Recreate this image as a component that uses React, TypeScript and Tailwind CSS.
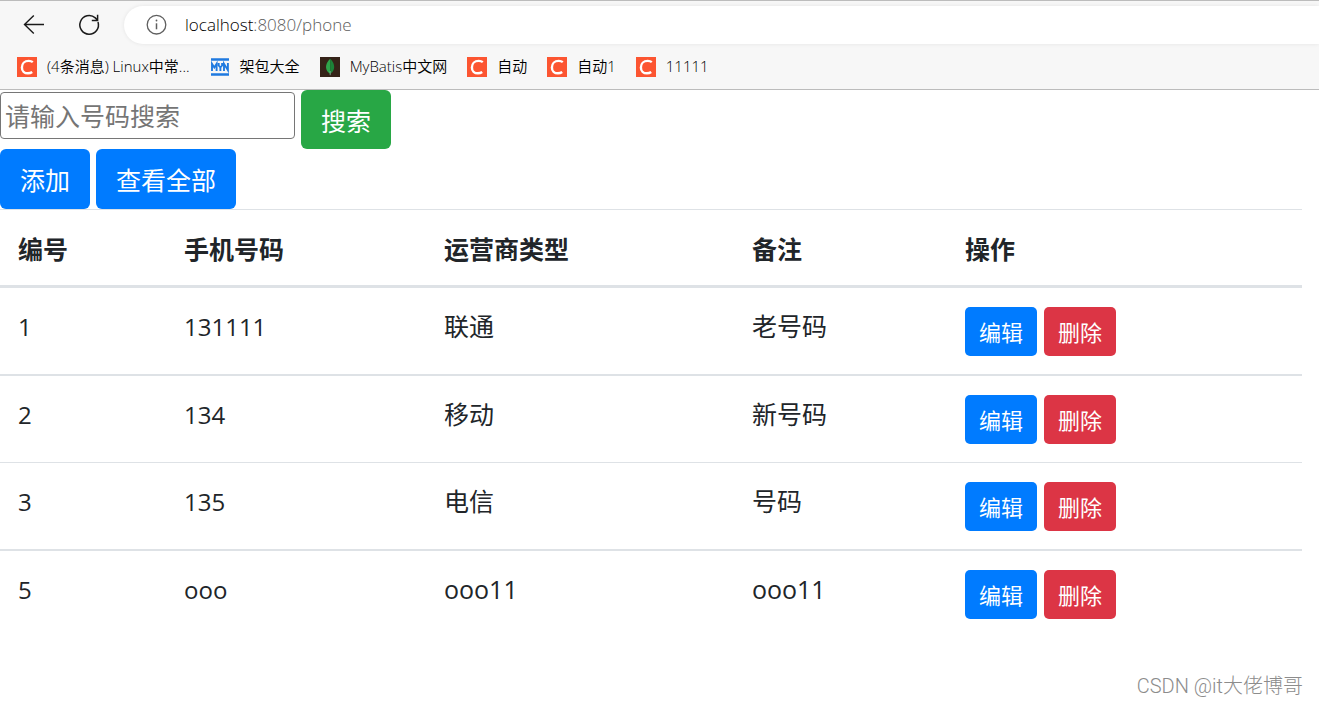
import type { ReactNode } from 'react';

interface PhoneRow {
  id: number;
  phone: string;
  carrier: string;
  remark: string;
  border: string;
}

const rows: PhoneRow[] = [
  { id: 1, phone: '131111', carrier: '联通', remark: '老号码', border: '' },
  { id: 2, phone: '134', carrier: '移动', remark: '新号码', border: 'border-t-2' },
  { id: 3, phone: '135', carrier: '电信', remark: '号码', border: 'border-t' },
  { id: 5, phone: 'ooo', carrier: 'ooo11', remark: 'ooo11', border: 'border-t-2' },
];

const columns = [
  { title: '编号', width: 'w-[12.75%]' },
  { title: '手机号码', width: 'w-[19.97%]' },
  { title: '运营商类型', width: 'w-[23.65%]' },
  { title: '备注', width: 'w-[16.36%]' },
  { title: '操作', width: '' },
];

function CsdnIcon() {
  return (
    <svg viewBox="0 0 20 20" className="h-5 w-5 shrink-0" aria-hidden="true">
      <rect width="20" height="20" fill="#fc5531" />
      <path
        d="M15.8 5.2C14.600 4.200 13.300 3.900 11.700 3.900 7.500 3.900 4.900 6.700 4.900 10.400c0 3.800 2.600 5.900 6 5.900 1.600 0 3.100-.4 4.300-1.300"
        fill="none"
        stroke="#fff"
        strokeWidth="2.4"
      />
    </svg>
  );
}

function MvnIcon() {
  return (
    <svg viewBox="0 0 20 20" className="h-5 w-5 shrink-0" aria-hidden="true">
      <path d="M1 2.500h18M1 17.500h18" stroke="#1f7ae0" strokeWidth="2.400" />
      <path
        d="M2 14V6.800L4.300 10.500l2.300-3.700V14M8.700 6v2.500l1.700 2v3.500v-3.500l1.700-2V6M14 14V6.800l3.900 6.400V6"
        fill="none"
        stroke="#1f7ae0"
        strokeWidth="1.900"
      />
    </svg>
  );
}

function LeafIcon() {
  return (
    <svg viewBox="0 0 20 20" className="h-5 w-5 shrink-0" aria-hidden="true">
      <rect width="20" height="20" fill="#352318" />
      <path d="M10.2 1.800C7.400 4.400 6 7.300 6 10c0 3 1.600 5.200 4.200 6.800z" fill="#2fa44a" />
      <path d="M10.200 1.800C12.900 4.400 14.200 7.300 14.200 10c0 3-1.500 5.200-4 6.800z" fill="#1c8238" />
      <path d="M10.200 14v4.200" stroke="#8bb59a" strokeWidth=".8" />
    </svg>
  );
}

function Bookmark({ icon, children }: { icon: ReactNode; children: ReactNode }) {
  return (
    <a href="#" className="flex items-center gap-[10px] text-[15px] leading-[18px] text-black">
      {icon}
      <span className="pb-[2px] whitespace-nowrap">{children}</span>
    </a>
  );
}

function BrowserBar() {
  return (
    <header className="border-t border-b border-[#bcbcbc] bg-[#f7f7f7]">
      <div className="flex items-center pt-[5px]">
        <button type="button" aria-label="Back" className="ml-[22px] h-6 w-6">
          <svg viewBox="0 0 24 24" className="h-6 w-6" fill="none" stroke="#1a1a1a" strokeWidth="1.4">
            <path d="M22 11.500H2.500M11.800 2.500L2.500 11.500l9.300 9" />
          </svg>
        </button>
        <button type="button" aria-label="Refresh" className="ml-[31px] h-6 w-6">
          <svg viewBox="0 0 24 24" className="h-6 w-6" fill="none" stroke="#1a1a1a" strokeWidth="1.500">
            <path d="M21 9A9.300 9.300 0 1 1 18.300 4.900L20.600 7.200M20.600 1.800v5.600h-5.800" />
          </svg>
        </button>
        <div className="ml-[23px] flex h-[38px] flex-1 items-center rounded-l-full bg-white pl-[22px] shadow-[0_0_4px_rgba(0,0,0,0.08)]">
          <svg viewBox="0 0 22 22" className="h-[22px] w-[22px]" fill="none" stroke="#5f5f5f" strokeWidth="1.300">
            <circle cx="10.5" cy="10.7" r="9.300" />
            <path d="M10.5 9.300v6" strokeWidth="1.500" />
            <circle cx="10.5" cy="6.500" r=".9" fill="#5f5f5f" stroke="none" />
          </svg>
          <p className="ml-[17px] text-[17px] leading-6 text-[#5c5c5c]">
            <span className="text-black">localhost</span>:8080/phone
          </p>
        </div>
      </div>
      <nav className="flex h-[45px] items-center gap-5 pl-[17px]">
        <Bookmark icon={<CsdnIcon />}>(4条消息) Linux中常...</Bookmark>
        <Bookmark icon={<MvnIcon />}>架包大全</Bookmark>
        <Bookmark icon={<LeafIcon />}>MyBatis中文网</Bookmark>
        <Bookmark icon={<CsdnIcon />}>自动</Bookmark>
        <Bookmark icon={<CsdnIcon />}>自动1</Bookmark>
        <Bookmark icon={<CsdnIcon />}>11111</Bookmark>
      </nav>
    </header>
  );
}

export default function App() {
  return (
    <div className="min-h-screen bg-white font-['Open_Sans','Noto_Sans_CJK_SC',sans-serif] font-[350] text-[#212529]">
      <BrowserBar />

      <main className="mr-[17px] font-normal">
        {/* Search */}
        <form className="flex items-start gap-[6px]" onSubmit={(e) => e.preventDefault()}>
          <input
            type="text"
            aria-label="请输入号码搜索"
            placeholder="请输入号码搜索"
            className="mt-[2px] h-[47px] w-[295px] rounded-[4px] border border-[#767676] px-1 text-[25px] placeholder:text-[#757575]"
          />
          <button
            type="submit"
            className="rounded-[6px] bg-[#28a745] px-5 pt-3 pb-[9px] text-[25px] leading-[38px] text-white"
          >
            搜索
          </button>
        </form>

        <div className="flex gap-[6px]">
          <button type="button" className="rounded-[6px] bg-[#007bff] px-5 pt-3 pb-[10px] text-[25px] leading-[38px] text-white">
            添加
          </button>
          <button type="button" className="rounded-[6px] bg-[#007bff] px-5 pt-3 pb-[10px] text-[25px] leading-[38px] text-white">
            查看全部
          </button>
        </div>

        {/* Phone list */}
        <table className="w-full table-fixed border-separate border-spacing-0 text-[25px] leading-[38px]">
          <thead>
            <tr>
              {columns.map((c) => (
                <th
                  key={c.title}
                  className={`${c.width} border-t border-b-3 border-[#dee2e6] px-[18px] pt-5 pb-[17px] text-left font-bold`}
                >
                  {c.title}
                </th>
              ))}
            </tr>
          </thead>
          <tbody>
            {rows.map((row) => {
              const cell = `${row.border} border-[#dee2e6] px-[18px] align-top`;
              return (
                <tr key={row.id}>
                  <td className={`${cell} pt-5 text-[24px]`}>{row.id}</td>
                  <td className={`${cell} pt-5 text-[24px]`}>{row.phone}</td>
                  <td className={`${cell} pt-[19px]`}>{row.carrier}</td>
                  <td className={`${cell} pt-[19px]`}>{row.remark}</td>
                  <td className={`${cell} pt-[19px] pb-[18px]`}>
                    <div className="flex gap-[7px] text-[22px] leading-[34px] text-white">
                      <button type="button" className="rounded-[5px] bg-[#007bff] px-[14px] pt-2 pb-[7px]">
                        编辑
                      </button>
                      <button type="button" className="rounded-[5px] bg-[#dc3545] px-[14px] pt-2 pb-[7px]">
                        删除
                      </button>
                    </div>
                  </td>
                </tr>
              );
            })}
          </tbody>
        </table>
      </main>

      <footer className="mt-[34px] pr-4 text-right font-['Roboto','Noto_Sans_CJK_SC',sans-serif] text-[20px] leading-[30px] font-light text-[#8c8c8c]">
        CSDN @it大佬博哥
      </footer>
    </div>
  );
}
